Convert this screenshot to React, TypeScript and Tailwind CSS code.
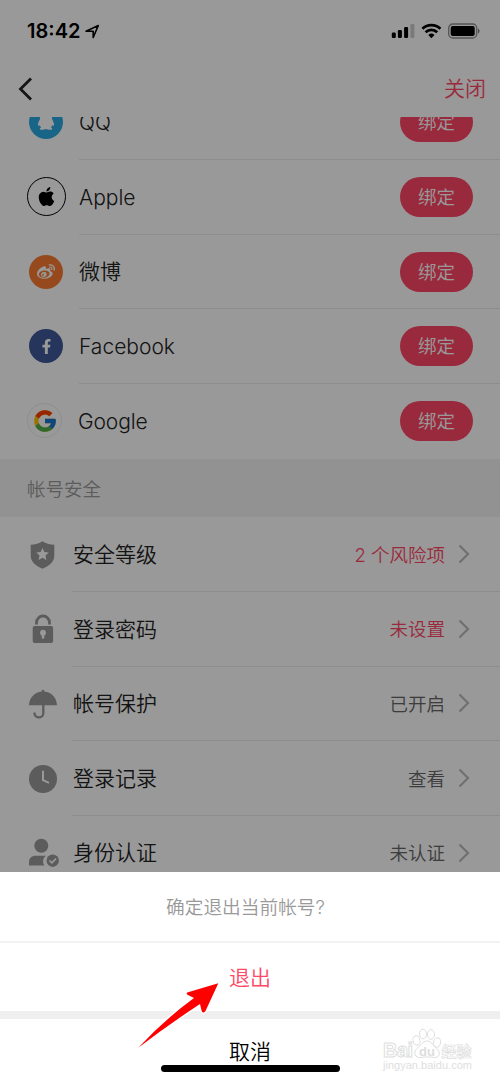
import React from "react";
import { FaFacebookF, FaWeibo } from "react-icons/fa";
import { FcGoogle } from "react-icons/fc";
import { SiApple } from "react-icons/si";

function PenguinIcon() {
  return (
    <svg width="34" height="34" viewBox="0 0 34 34" fill="#fff">
      <path d="M17 4.500c-4 0-6.300 3-6.300 6.500 0 1 .7 1.800.3 3-.8 1.800-2 3.500-2 5.300 0 1.700.6 2 1.900.9.200 1 .6 1.700 1.200 2.300-1.700.6-1.800 2.100.2 2.300 1.800.2 3.600 0 4.700-.7 1.100.7 2.900.9 4.700.7 2-.2 1.900-1.700.2-2.300.6-.6 1-1.300 1.200-2.300 1.300 1.100 1.900.8 1.900-.9 0-1.800-1.200-3.500-2-5.300-.4-1.200.3-2 .3-3 0-3.500-2.300-6.500-6.300-6.500z" />
    </svg>
  );
}

const accounts = [
  {
    name: "QQ",
    icon: (
      <span className="flex size-[34px] items-center justify-center rounded-full bg-[#28a9e2]">
        <PenguinIcon />
      </span>
    ),
  },
  {
    name: "Apple",
    icon: (
      <span className="flex size-[39px] items-center justify-center rounded-full border border-black text-black">
        <SiApple size={19} />
      </span>
    ),
  },
  {
    name: "微博",
    icon: (
      <span className="flex size-[34px] items-center justify-center rounded-full bg-[#fa7a30] text-white">
        <FaWeibo size={18} />
      </span>
    ),
  },
  {
    name: "Facebook",
    icon: (
      <span className="flex size-[34px] items-center justify-center rounded-full bg-[#3e5999] text-white">
        <FaFacebookF size={15} />
      </span>
    ),
  },
  {
    name: "Google",
    icon: (
      <span className="-ml-[3px] flex size-[35px] items-center justify-center rounded-full border border-[#ececec]">
        <FcGoogle size={26} />
      </span>
    ),
  },
];

function ShieldIcon() {
  return (
    <svg width="32" height="32" viewBox="0 0 32 32" fill="#999">
      <path d="M15.500 2.300c3.200 2.200 7.200 3.400 11.800 3.500v10.700c0 6-4.500 10-11.800 13.300C8.200 26.500 3.700 22.500 3.700 16.500V5.800C8.300 5.700 12.300 4.500 15.500 2.300z" />
      <path
        fill="#fff"
        d="M15.500 9l1.850 4.050 4.450.5-3.300 3 .9 4.350-3.900-2.150-3.900 2.150.9-4.350-3.300-3 4.450-.5z"
      />
    </svg>
  );
}

function LockIcon() {
  return (
    <svg width="32" height="32" viewBox="0 0 32 32" fill="#999">
      <path
        d="M9.500 11.500V9.500a6.500 6.500 0 0 1 13 0v2"
        fill="none"
        stroke="#999"
        strokeWidth="2.800"
      />
      <rect x="5.700" y="13" width="20.400" height="17" rx="2" />
      <circle cx="16" cy="19.700" r="2.900" fill="#fff" />
      <path d="M14.700 20.500h2.600v4a1.300 1.300 0 0 1-2.600 0z" fill="#fff" />
    </svg>
  );
}

function UmbrellaIcon() {
  return (
    <svg width="32" height="32" viewBox="0 0 32 32" fill="#999">
      <path d="M2 17.300C2.300 9.500 8 4.200 14.700 3.600V3a1.300 1.300 0 0 1 2.600 0v.6C24.200 4.200 29.700 9.500 30 17.300z" />
      <path
        d="M16.300 16v8.700a4.400 4.400 0 0 1-8.800.7v-1"
        fill="none"
        stroke="#999"
        strokeWidth="2.300"
      />
    </svg>
  );
}

function ClockIcon() {
  return (
    <svg width="32" height="32" viewBox="0 0 32 32">
      <circle cx="16" cy="16" r="14" fill="#999" />
      <path d="M16 7.700v9.500l6 2.600" fill="none" stroke="#fff" strokeWidth="2" />
    </svg>
  );
}

function IdentityIcon() {
  return (
    <svg width="32" height="32" viewBox="0 0 32 32" fill="#999">
      <circle cx="14.300" cy="8.700" r="7" />
      <path d="M2 28.500v-3.300c0-4.300 2.700-6.500 6.500-6.500h10.200a8 8 0 0 0-1.400 9.800z" />
      <circle cx="25.700" cy="23.700" r="6.200" />
      <path d="M22.400 23.500l2.500 2.400 4.100-4.200" fill="none" stroke="#fff" strokeWidth="1.700" />
    </svg>
  );
}

const settings = [
  { name: "安全等级", value: "2 个风险项", warn: true, icon: <ShieldIcon /> },
  { name: "登录密码", value: "未设置", warn: true, icon: <LockIcon /> },
  { name: "帐号保护", value: "已开启", warn: false, icon: <UmbrellaIcon /> },
  { name: "登录记录", value: "查看", warn: false, icon: <ClockIcon /> },
  { name: "身份认证", value: "未认证", warn: false, icon: <IdentityIcon /> },
];

function StatusBar() {
  return (
    <div className="flex h-[60px] items-center pt-0.5 pr-5 pl-[27px] text-black">
      <span className="text-[20px] font-semibold">18:42</span>
      <svg className="ml-[5px]" width="15" height="15" viewBox="0 0 15 15">
        <path
          d="M1 7.200L13.300 1.500 8.200 13.500V7.200z"
          fill="none"
          stroke="#000"
          strokeWidth="1.600"
          strokeLinejoin="round"
        />
      </svg>
      <svg className="ml-auto" width="90" height="16" viewBox="0 0 90 16">
        <rect x="1.800" y="9.500" width="4" height="5.500" rx="1.200" />
        <rect x="7.900" y="7" width="4" height="8" rx="1.200" />
        <rect x="14.100" y="4" width="4" height="11" rx="1.200" />
        <rect x="20.400" y="1" width="4" height="14" rx="1.200" opacity=".2" />
        <g fill="none" stroke="#000" strokeWidth="2.800">
          <path d="M32.400 5.700a13 13 0 0 1 18 0" />
          <path d="M35.600 9.300a8.300 8.300 0 0 1 11.600 0" />
        </g>
        <path d="M38.300 12a4.600 4.600 0 0 1 6.200 0l-3.100 3.200z" />
        <rect x="58.700" y="1" width="28" height="14" rx="4" fill="none" stroke="#000" strokeOpacity=".45" strokeWidth="1.300" />
        <rect x="60.700" y="3" width="24" height="10" rx="2" />
        <path d="M88 5.500c2 .8 2 4.200 0 5z" opacity=".5" />
      </svg>
    </div>
  );
}

function ActionSheet() {
  return (
    <div className="absolute inset-x-0 bottom-0 flex h-[211px] flex-col bg-white text-center">
      <p className="h-[69px] pr-[9px] text-[18.700px] leading-[71px] text-[#999]">
        确定退出当前帐号?
      </p>
      <button className="h-[69.500px] border-t-2 border-[#f2f2f2] pt-px text-[21px] text-[#ff4766]">
        退出
      </button>
      <div className="h-2 bg-[#efefef]" />
      <button className="h-[64px] pt-0.5 text-[21px] text-black">取消</button>
      <div className="mx-auto -mt-[18px] h-[7px] w-[179px] shrink-0 rounded-full bg-black" />
    </div>
  );
}

function Watermark() {
  return (
    <svg
      className="absolute right-[27px] bottom-[8px]"
      width="96"
      height="50"
      viewBox="0 0 96 50"
      fill="#fff"
      stroke="#dedede"
      strokeWidth="1"
      fontFamily="'Liberation Sans', 'Noto Sans CJK SC', sans-serif"
    >
      <text x="6" y="32" fontSize="20" fontWeight="700" textLength="30">Bai</text>
      <ellipse cx="39.500" cy="15.500" rx="3.500" ry="4.700" transform="rotate(-15 39.500 15.500)" />
      <ellipse cx="46" cy="9" rx="3.500" ry="4.800" />
      <ellipse cx="54" cy="9.500" rx="3.500" ry="4.800" />
      <ellipse cx="60" cy="17.500" rx="3.500" ry="4.700" transform="rotate(15 60 17.500)" />
      <path d="M50 16c4.500 0 6 4.500 9.500 7.500 5 4.500 3 9-2 9-5-.8-9-.8-14 0-5 .5-8-4.500-3.500-9 4-3 5.500-7.500 10-7.500z" />
      <text x="42" y="30.500" fontSize="13" fontWeight="700" fill="#dedede" stroke="none">du</text>
      <text x="64.500" y="32" fontSize="15" fontWeight="700" strokeWidth=".7">经验</text>
      <text x="6" y="44" fontSize="11" stroke="none" fill="#dedede" textLength="89">
        jingyan.baidu.com
      </text>
    </svg>
  );
}

function App() {
  return (
    <div className="relative h-[1083px] w-[500px] overflow-hidden bg-white font-['Inter','Noto_Sans_CJK_SC',sans-serif] font-[350] text-[#222]">
      <StatusBar />
      <header className="flex h-[57px] items-center justify-between pr-[14px] pl-[18px]">
        <svg width="15" height="24" viewBox="0 0 15 24">
          <path d="M13 1.500L2.500 12 13 22.500" fill="none" stroke="#222" strokeWidth="2.800" />
        </svg>
        <button className="text-[21px] text-[#ff4766]">关闭</button>
      </header>

      <main className="h-[800px] overflow-hidden">
        <ul className="-mt-[31.600px]">
          {accounts.map((item) => (
            <li key={item.name} className="group flex h-[74.670px]">
              <div className="flex w-[79px] items-center justify-center pr-[13px] pb-px pl-[26px]">
                {item.icon}
              </div>
              <div className="flex flex-1 items-center justify-between border-b border-[#ececec] pr-[27px] group-last:border-transparent">
                <span className="pt-px text-[21px] group-last:-ml-px group-last:tracking-[-0.1px]">
                  {item.name}
                </span>
                <button className="h-10 w-[73px] rounded-full bg-[#ff4766] pt-0.5 text-[18.500px] text-white">
                  绑定
                </button>
              </div>
            </li>
          ))}
        </ul>

        <h2 className="h-[58.600px] bg-[#f3f3f3] pl-[27px] text-[18.500px] leading-[60px] text-[#999]">
          帐号安全
        </h2>

        <ul>
          {settings.map((item) => (
            <li key={item.name} className="flex h-[74.670px]">
              <div className="flex w-[72px] items-center pl-[27px]">{item.icon}</div>
              <div className="flex flex-1 items-center border-b border-[#ececec] pr-[30px] pl-px">
                <span className="pt-px text-[21px]">{item.name}</span>
                <span
                  className={
                    "ml-auto pt-[3px] text-[18.500px] " +
                    (item.warn ? "text-[#ff4766]" : "text-[#666]")
                  }
                >
                  {item.value}
                </span>
                <svg className="ml-[13px]" width="12" height="20" viewBox="0 0 12 20">
                  <path d="M1.500 1.500L10 10l-8.500 8.500" fill="none" stroke="#bbb" strokeWidth="2.200" />
                </svg>
              </div>
            </li>
          ))}
        </ul>
      </main>

      <div className="absolute inset-0 bg-black/40" />
      <ActionSheet />

      {/* pointer to the confirm button */}
      <svg className="absolute top-[976px] left-[132px]" width="94" height="78" viewBox="0 0 94 78">
        <path
          d="M6.300 71.700Q32 44 62 22l-6.500-3.200q-2-1.500.5-2.500L86.300 7.300 73.500 35q-2.500 3-3.800 0L68 28Q36 49 6.300 71.700z"
          fill="#f00"
          stroke="#fff"
          strokeWidth="3"
          paintOrder="stroke"
        />
      </svg>
      <Watermark />
    </div>
  );
}

export default App;
